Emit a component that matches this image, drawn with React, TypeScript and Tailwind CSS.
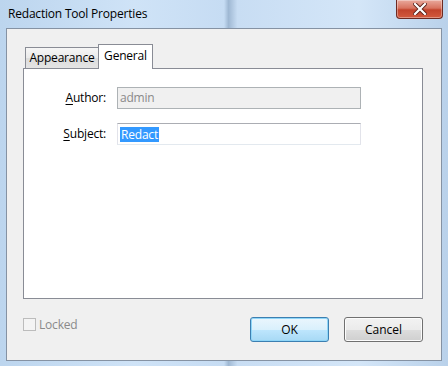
import React from 'react';

const font = { fontFamily: '"Open Sans", "Noto Sans", sans-serif' };

const CloseButton: React.FC = () => (
  <div className="absolute right-[5px] top-0 w-[47px] h-[19px] rounded-b-[4px] border border-t-0 border-[#6d2a22] bg-[linear-gradient(#e9a99c_0%,#d8735f_45%,#c2432b_55%,#d35a3e_100%)] flex items-center justify-center shadow-[inset_0_0_0_1px_rgba(255,255,255,0.35)]">
    <svg width="14" height="12" viewBox="0 0 14 12">
      <path d="M2 1 L12 11 M12 1 L2 11" stroke="#5a2018" strokeWidth="4" strokeLinecap="square" />
      <path d="M2 1 L12 11 M12 1 L2 11" stroke="#ffffff" strokeWidth="2.2" strokeLinecap="square" />
    </svg>
  </div>
);

const Underlined: React.FC<{ ch: string; rest: string }> = ({ ch, rest }) => (
  <span>
    <span className="underline underline-offset-2">{ch}</span>
    {rest}
  </span>
);

export default function App() {
  return (
    <div
      className="relative w-[448px] h-[366px] overflow-hidden bg-[linear-gradient(90deg,#bcd5ee_0%,#cfe3f7_30%,#c6dcf3_50%,#9fb8d3_51%,#c8ddf3_53%,#d4e6f8_80%,#b9d1ea_100%)] text-[12px] text-black flex flex-col"
      style={font}
    >
      {/* title bar */}
      <div className="h-[28px] flex items-center pl-[8px] shrink-0">
        <span className="text-[12px] tracking-[-0.2px]">Redaction Tool Properties</span>
      </div>
      <CloseButton />

      {/* client area */}
      <div className="ml-[6px] mr-[6px] h-[333px] border border-[#8592a3] bg-[#f0f0f0] flex flex-col">
        <div className="pl-[16px] pt-[15px]">
          {/* tab strip */}
          <div className="flex items-end h-[24px] pl-[2px] relative z-10">
            <div className="h-[21px] w-[73px] border border-r-0 border-b-0 border-[#898c95] bg-[linear-gradient(#f6f6f6_0%,#eaeaea_50%,#dcdcdc_51%,#e4e4e4_100%)] flex items-center justify-center text-[12px] tracking-[-0.2px]">
              Appearance
            </div>
            <div className="h-[25px] w-[55px] border border-b-0 border-[#898c95] bg-white flex items-start justify-center pt-[2px] -mb-px text-[12px] tracking-[-0.2px]">
              General
            </div>
          </div>
          {/* tab panel */}
          <div className="w-[400px] h-[231px] border border-[#898c95] bg-white pt-[18px]">
            <div className="flex items-center h-[22px]">
              <div className="w-[82px] text-right tracking-[-0.2px]">
                <Underlined ch="A" rest="uthor:" />
              </div>
              <div className="ml-[11px] w-[244px] h-[22px] border border-[#adb2b5] bg-[#f0f0f0] flex items-center pl-[2px] text-[#8a8a8a] tracking-[-0.2px]">
                admin
              </div>
            </div>
            <div className="flex items-center h-[22px] mt-[14px]">
              <div className="w-[82px] text-right tracking-[-0.2px]">
                <Underlined ch="S" rest="ubject:" />
              </div>
              <div className="ml-[11px] w-[244px] h-[22px] border border-[#abadb3] border-x-[#e2e3ea] border-b-[#e3e9ef] bg-white flex items-center pl-[2px]">
                <span className="bg-[#3399ff] text-white leading-[15px] px-px tracking-[-0.2px]">Redact</span>
              </div>
            </div>
          </div>
        </div>

        {/* bottom row */}
        <div className="flex items-start pl-[16px] pr-[18px] mt-[18px]">
          <div className="flex items-center gap-[3px] text-[#8a8a8a] mt-[1px]">
            <div className="w-[13px] h-[13px] border border-[#bcbcbc] bg-[#f4f4f4]" />
            <span className="tracking-[-0.2px] leading-[13px]">Locked</span>
          </div>
          <div className="ml-auto flex gap-[15px]">
            <button className="w-[79px] h-[25px] rounded-[3px] border border-[#3c7fb1] bg-[linear-gradient(#eaf6fd_0%,#d9f0fc_50%,#bee6fd_51%,#a7d9f5_100%)] shadow-[inset_0_0_0_1px_#8fd6f8] text-[12px]" style={font}>
              OK
            </button>
            <button className="w-[79px] h-[25px] rounded-[3px] border border-[#707070] bg-[linear-gradient(#f2f2f2_0%,#ebebeb_50%,#dddddd_51%,#cfcfcf_100%)] shadow-[inset_0_0_0_1px_#fcfcfc] text-[12px]" style={font}>
              Cancel
            </button>
          </div>
        </div>
      </div>
    </div>
  );
}
